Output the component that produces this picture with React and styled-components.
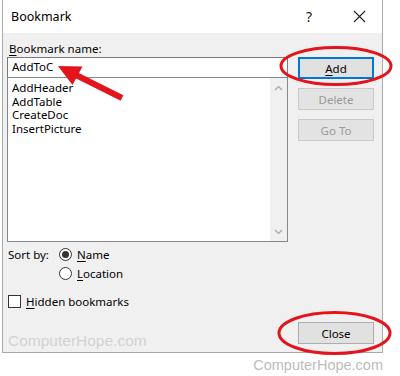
import React from 'react';
import styled, { createGlobalStyle } from 'styled-components';

const GlobalStyle = createGlobalStyle`
  html, body {
    margin: 0;
    padding: 0;
    background: #fff;
  }
  body {
    font-family: "Noto Sans", "Open Sans", sans-serif;
    font-size: 11.5px;
    color: #000;
  }
`;

const Page = styled.div`
  position: relative;
  width: 400px;
  height: 376px;
  overflow: hidden;
  background: #fff;
`;

const Dialog = styled.div`
  display: flex;
  flex-direction: column;
  box-sizing: border-box;
  margin-left: 2px;
  width: 381px;
  height: 353px;
  border: 1px solid #a9a9a9;
  border-top: none;
  background: #f0f0f0;
`;

const TitleBar = styled.div`
  display: flex;
  align-items: center;
  height: 33px;
  padding: 0 0 0 8px;
  background: #fff;
  font-size: 12.5px;
`;

const Title = styled.div`
  flex: 1;
`;

const Help = styled.div`
  width: 14px;
  margin-right: 33px;
  font-size: 14px;
  color: #222;
`;

const CloseX = styled.div`
  display: flex;
  align-items: center;
  margin-right: 16px;
`;

const Body = styled.div`
  flex: 1;
  display: flex;
  gap: 10px;
  padding: 8px 6px 0 4px;
`;

const LeftCol = styled.div`
  display: flex;
  flex-direction: column;
  width: 281px;
`;

const RightCol = styled.div`
  display: flex;
  flex-direction: column;
  width: 76px;
  padding-top: 16px;
  padding-bottom: 8px;
`;

const Label = styled.div`
  height: 16px;
  line-height: 16px;
  padding-left: 2px;
`;

const Key = styled.span`
  text-decoration: underline;
  text-underline-offset: 2px;
`;

const NameInput = styled.div`
  box-sizing: border-box;
  height: 20px;
  line-height: 18px;
  padding-left: 4px;
  background: #fff;
  border: 1px solid #7a7a7a;
  border-bottom: none;
`;

const List = styled.div`
  box-sizing: border-box;
  display: flex;
  height: 165px;
  background: #fff;
  border: 1px solid #828790;
`;

const Items = styled.div`
  flex: 1;
  padding: 3px 0 0 4px;
  line-height: 13.5px;
`;

const ScrollBar = styled.div`
  display: flex;
  flex-direction: column;
  justify-content: space-between;
  align-items: center;
  width: 17px;
  padding: 7px 0 6px;
  background: #f0f0f0;
`;

const RadioRow = styled.div`
  display: flex;
  align-items: center;
  height: 17px;
  margin-top: ${p => p.$top || 0}px;
  padding-left: ${p => p.$indent || 0}px;
`;

const SortLabel = styled.div`
  width: 51px;
  padding-left: 1px;
`;

const Radio = styled.span`
  box-sizing: border-box;
  display: flex;
  align-items: center;
  justify-content: center;
  width: 13px;
  height: 13px;
  margin-right: 5px;
  border: 1px solid #333;
  border-radius: 50%;
  background: #fff;
  &::after {
    content: '';
    display: ${p => (p.$checked ? 'block' : 'none')};
    width: 7px;
    height: 7px;
    border-radius: 50%;
    background: #333;
  }
`;

const CheckBox = styled.span`
  box-sizing: border-box;
  width: 13px;
  height: 13px;
  margin: 0 5px 0 1px;
  border: 1px solid #333;
  background: #fff;
`;

const Watermark = styled.div`
  margin-top: auto;
  padding: 0 0 2px 1px;
  font-family: "Liberation Sans", Arial, sans-serif;
  font-size: 15.5px;
  line-height: 18px;
  color: #d2d2d2;
`;

const Button = styled.div`
  box-sizing: border-box;
  height: 22px;
  margin-bottom: ${p => p.$gap || 0}px;
  margin-top: ${p => (p.$bottom ? 'auto' : '0')};
  display: flex;
  align-items: center;
  justify-content: center;
  background: ${p => (p.$disabled ? '#e3e3e3' : '#e1e1e1')};
  border: ${p => (p.$primary ? '2px solid #0078d7' : p.$disabled ? '1px solid #c9c9c9' : '1px solid #adadad')};
  color: ${p => (p.$disabled ? '#9a9a9a' : '#000')};
`;

const Footer = styled.div`
  width: 383px;
  text-align: right;
  padding-top: 4px;
  font-family: "Liberation Sans", Arial, sans-serif;
  font-size: 14.5px;
  color: #bdbdbd;
`;

const Overlay = styled.svg`
  position: absolute;
  left: 0;
  top: 0;
  pointer-events: none;
`;

const Chevron = ({ up }) => (
  <svg width="9" height="6" viewBox="0 0 9 6">
    <path d={up ? 'M1 5 L4.5 1.5 L8 5' : 'M1 1 L4.5 4.5 L8 1'} fill="none" stroke="#a6a6a6" strokeWidth="1.2" />
  </svg>
);

export default function App() {
  return (
    <>
      <GlobalStyle />
      <Page>
        <Dialog>
          <TitleBar>
            <Title>Bookmark</Title>
            <Help>?</Help>
            <CloseX>
              <svg width="13" height="13" viewBox="0 0 13 13">
                <path d="M1 1 L12 12 M12 1 L1 12" stroke="#222" strokeWidth="1.1" />
              </svg>
            </CloseX>
          </TitleBar>
          <Body>
            <LeftCol>
              <Label><Key>B</Key>ookmark name:</Label>
              <NameInput>AddToC</NameInput>
              <List>
                <Items>
                  <div>AddHeader</div>
                  <div>AddTable</div>
                  <div>CreateDoc</div>
                  <div>InsertPicture</div>
                </Items>
                <ScrollBar>
                  <Chevron up />
                  <Chevron />
                </ScrollBar>
              </List>
              <RadioRow $top={4}>
                <SortLabel>Sort by:</SortLabel>
                <Radio $checked />
                <span><Key>N</Key>ame</span>
              </RadioRow>
              <RadioRow $top={2} $indent={52}>
                <Radio />
                <span><Key>L</Key>ocation</span>
              </RadioRow>
              <RadioRow $top={11}>
                <CheckBox />
                <span><Key>H</Key>idden bookmarks</span>
              </RadioRow>
              <Watermark>ComputerHope.com</Watermark>
            </LeftCol>
            <RightCol>
              <Button $primary $gap={9}><span><Key>A</Key>dd</span></Button>
              <Button $disabled $gap={9}>Delete</Button>
              <Button $disabled>Go To</Button>
              <Button $bottom>Close</Button>
            </RightCol>
          </Body>
        </Dialog>
        <Footer>ComputerHope.com</Footer>
        <Overlay width="400" height="376" viewBox="0 0 400 376">
          <ellipse cx="336" cy="66" rx="55" ry="18.5" fill="none" stroke="#e3141b" strokeWidth="3" />
          <ellipse cx="334.5" cy="333" rx="55.5" ry="20.5" fill="none" stroke="#e3141b" strokeWidth="3" />
          <line x1="122" y1="98" x2="76" y2="75" stroke="#e3141b" strokeWidth="6" />
          <polygon points="58,66 82.5,66.5 72.5,85" fill="#e3141b" />
        </Overlay>
      </Page>
    </>
  );
}
